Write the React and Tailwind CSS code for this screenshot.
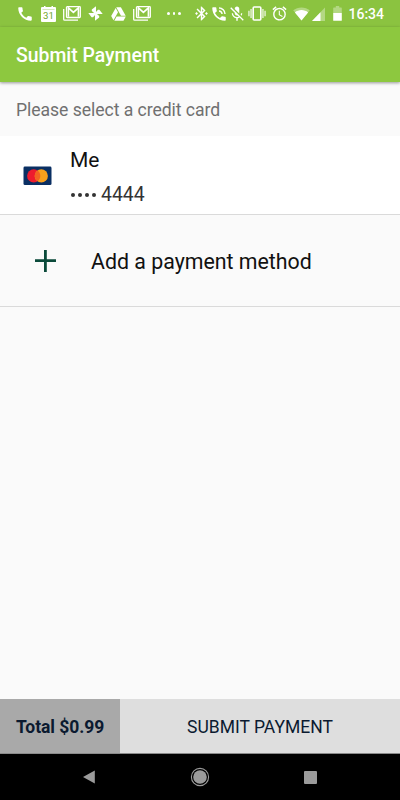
import React from 'react'
import { MdCall, MdPhoneInTalk, MdMicOff, MdBluetoothConnected, MdAlarm } from 'react-icons/md'

const CalendarIcon = ({ className }) => (
  <svg className={className} width="15" height="16" viewBox="0 0 15 16">
    <path fill="#fff" d="M1 1h2V0h1.5v1h6V0H12v1h2a1 1 0 0 1 1 1v13a1 1 0 0 1-1 1H1a1 1 0 0 1-1-1V2a1 1 0 0 1 1-1z" />
    <path stroke="#8bc340" strokeWidth="1" d="M1.5 3.5h12" opacity=".35" />
    <text x="7.4" y="12.7" textAnchor="middle" fontSize="9.6" fontWeight="400" fill="#6fa52c" fontFamily="Roboto, sans-serif">31</text>
  </svg>
)

const MailStackIcon = ({ className }) => (
  <svg className={className} width="18" height="15" viewBox="0 0 18 15" fill="none" stroke="#fff">
    <path strokeWidth="1.3" d="M.7 3v10.2a1 1 0 0 0 1 1H15" />
    <rect x="3.5" y=".7" width="13.8" height="10.8" rx=".8" strokeWidth="1.3" />
    <path strokeWidth="1.6" d="M5.4 10.8V1.8l5 4.6 5-4.6v9" />
  </svg>
)

const PinwheelIcon = ({ className }) => (
  <svg className={className} width="15" height="15" viewBox="0 0 15 15" fill="#fff">
    <path d="M8 .3v7.2H6.6L3.8 5V3.6z" />
    <path d="M14.7 8H7.5V6.6L10 3.8h1.4z" />
    <path d="M7 14.7V7.5h1.4l2.8 2.5v1.4z" />
    <path d="M.3 7h7.2v1.4L5 11.2H3.6z" />
  </svg>
)

const DriveIcon = ({ className }) => (
  <svg className={className} width="15" height="14" viewBox="0 0 15 14" fill="#fff">
    <path d="M5.2.3h4.7l4.8 8.4H10z" />
    <path d="M4.7 1.1 7 5.2l-4.5 8L.2 9.1z" />
    <path d="M5.6 9.5h9.2l-2.3 4.2H3.3z" />
  </svg>
)

const VibrationIcon = ({ className }) => (
  <svg className={className} width="18" height="15" viewBox="0 0 18 15" fill="none" stroke="#fff">
    <rect x="5.2" y="1" width="7.6" height="13" rx=".9" strokeWidth="1.6" />
    <path strokeWidth="1.9" opacity=".6" d="M.9 4.8v5.4M3.1 3v9M14.9 3v9M17.1 4.8v5.4" />
  </svg>
)

const WifiIcon = ({ className }) => (
  <svg className={className} width="17" height="14" viewBox="0 0 17 14" fill="#fff">
    <path opacity=".35" d="M8.5 13.6.2 3.3C2.5 1.4 5.3.4 8.5.4s6 1 8.3 2.9z" />
    <path d="M8.5 13.6 1.9 5.4C3.7 4 6 3.1 8.5 3.1s4.8.9 6.6 2.3z" />
  </svg>
)

const SignalIcon = ({ className }) => (
  <svg className={className} width="13" height="14" viewBox="0 0 13 14" fill="#fff">
    <path opacity=".35" d="M13 .5V14H0z" />
    <path d="M8.5 5.2V14H0z" />
  </svg>
)

const BatteryIcon = ({ className }) => (
  <svg className={className} width="9" height="15" viewBox="0 0 9 15" fill="#fff">
    <path opacity=".35" d="M.8 1.6h2V0h3.4v1.6h2a.6.6 0 0 1 .6.6V7H.2V2.2a.6.6 0 0 1 .6-.6z" />
    <path d="M.2 7h8.6v7.2a.6.6 0 0 1-.6.6H.8a.6.6 0 0 1-.6-.6z" />
  </svg>
)

const MastercardIcon = ({ className }) => (
  <svg className={className} width="29" height="20" viewBox="0 0 29 20">
    <rect x=".5" y=".5" width="28" height="18.6" rx="1.4" fill="#0a2f63" />
    <circle cx="10.7" cy="9.9" r="6.6" fill="#ed1c2e" />
    <circle cx="18.3" cy="9.9" r="6.6" fill="#f9a01b" />
    <path fill="#f26322" d="M14.5 4.5a6.6 6.6 0 0 1 0 10.8 6.6 6.6 0 0 1 0-10.8z" />
  </svg>
)

const StatusBar = () => (
  <div className="flex h-[27px] items-center bg-[#8bc340] pl-[16px] text-white">
    <MdCall size={18} />
    <CalendarIcon className="ml-[7px]" />
    <MailStackIcon className="ml-[7px]" />
    <PinwheelIcon className="ml-[7px]" />
    <DriveIcon className="ml-[8px]" />
    <MailStackIcon className="ml-[7px]" />
    <div className="ml-[16px] flex gap-[3px]">
      <span className="size-[2.5px] rounded-full bg-white" />
      <span className="size-[2.5px] rounded-full bg-white" />
      <span className="size-[2.5px] rounded-full bg-white" />
    </div>
    <MdBluetoothConnected className="ml-[12px]" size={17} />
    <MdPhoneInTalk size={18} />
    <MdMicOff size={18} />
    <VibrationIcon className="ml-[2px]" />
    <MdAlarm className="ml-[5px]" size={17} />
    <WifiIcon className="ml-[5px]" />
    <SignalIcon className="ml-[2px]" />
    <BatteryIcon className="ml-[8px]" />
    <span className="ml-[7px] pt-px text-[14px] font-medium">16:34</span>
  </div>
)

const NavBar = () => (
  <div className="flex h-[46px] items-center bg-black pl-[82px]">
    <svg width="14" height="14" viewBox="0 0 14 14" fill="#9b9b9b">
      <path d="M12.8.5v13L1 7z" />
    </svg>
    <svg className="ml-[94px]" width="20" height="20" viewBox="0 0 20 20">
      <circle cx="10" cy="10" r="8.6" fill="none" stroke="#9b9b9b" strokeWidth="1.1" />
      <circle cx="10" cy="10" r="6.8" fill="#9b9b9b" />
    </svg>
    <span className="ml-[94px] size-[13px] rounded-[1px] bg-[#9b9b9b]" />
  </div>
)

const App = () => {
  return (
    <div className="flex h-[800px] w-[400px] flex-col bg-[#fafafa] font-[Roboto,sans-serif]">
      <StatusBar />

      <header className="z-10 flex h-[55px] items-center bg-[#8dc83f] px-4 pt-[3px] shadow-[0_1px_3px_rgba(0,0,0,0.4)]">
        <h1 className="text-[19.4px] font-medium text-white">Submit Payment</h1>
      </header>

      <main className="flex-1">
        <p className="flex h-[54px] items-center px-4 pt-[3px] text-[17.6px] tracking-[-0.05px] text-[#707070]">
          Please select a credit card
        </p>

        <div className="flex h-[79px] items-center border-b border-[#dadada] bg-white pl-[23px] pt-px">
          <MastercardIcon />
          <div className="ml-[18px] pt-[3px]">
            <div className="text-[21px] leading-[24px] text-[#111]">Me</div>
            <div className="mt-[11px] flex items-center text-[19.4px] leading-[24px] text-[#333]">
              <span className="mr-[5px] flex gap-[3px] pl-px">
                <span className="size-[4px] rounded-full bg-[#333]" />
                <span className="size-[4px] rounded-full bg-[#333]" />
                <span className="size-[4px] rounded-full bg-[#333]" />
                <span className="size-[4px] rounded-full bg-[#333]" />
              </span>
              4444
            </div>
          </div>
        </div>

        <button className="flex h-[92px] w-full items-center border-b border-[#dadada] pl-[35px]">
          <svg width="21" height="22" viewBox="0 0 21 22" stroke="#0b4a3a" strokeWidth="2.8">
            <path d="M0 10.6h21M10.4 0v22" />
          </svg>
          <span className="ml-[35px] pt-[3px] text-[21.35px] text-[#111]">Add a payment method</span>
        </button>
      </main>

      <footer className="flex h-[55px] border-b border-[#8a8a8a] text-[17.5px] text-[#0b1a30]">
        <div className="flex w-[120px] items-center bg-[#a9a9a9] pl-4 pt-[3px] font-bold tracking-[-0.05px]">Total $0.99</div>
        <button className="flex-1 bg-[#dedede] pt-[3px]">SUBMIT PAYMENT</button>
      </footer>

      <NavBar />
    </div>
  )
}

export default App
